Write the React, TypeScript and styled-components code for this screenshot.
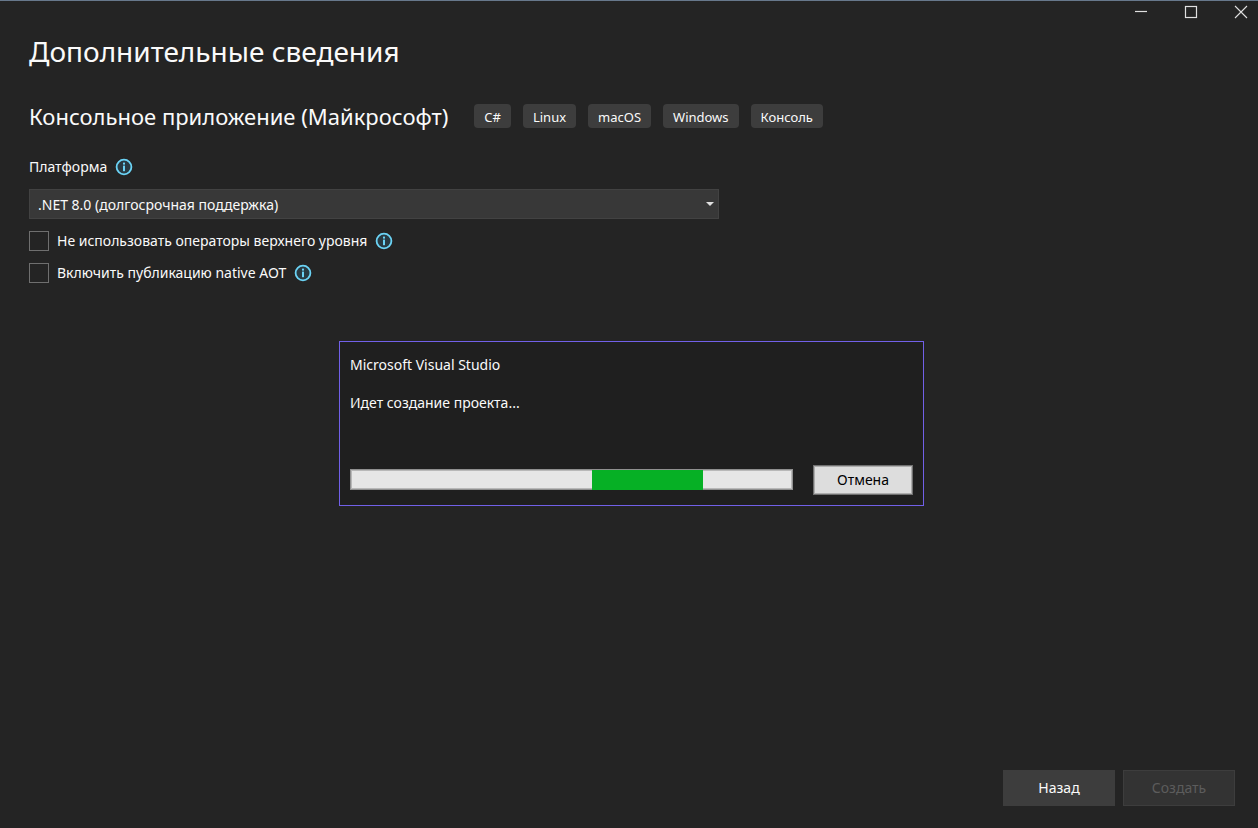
import React from "react";
import styled, { createGlobalStyle } from "styled-components";

const GlobalStyle = createGlobalStyle`
  *, *::before, *::after { box-sizing: border-box; }
  body {
    margin: 0;
    background: #242424;
    color: #fafafa;
    font: 14px/20px "Noto Sans", "Open Sans", sans-serif;
  }
  button, select, input { font: inherit; color: inherit; margin: 0; }
`;

const Window = styled.div`
  min-height: 100vh;
  display: flex;
  flex-direction: column;
  border-top: 1px solid #67788c;
`;

const Caption = styled.header`
  display: flex;
  justify-content: flex-end;
  gap: 16px;
`;

const CaptionButton = styled.button`
  width: 34px;
  height: 22px;
  padding: 0;
  border: 0;
  background: none;
  color: #e0e0e0;
  display: flex;
  align-items: center;
  justify-content: center;
`;

const Content = styled.main`
  flex: 1;
  padding: 8px 28px 0 29px;
`;

const Title = styled.h1`
  margin: 0;
  font-size: 28px;
  line-height: 40px;
  font-weight: 400;
`;

const TemplateRow = styled.div`
  display: flex;
  align-items: center;
  gap: 26px;
  margin-top: 29px;
`;

const TemplateName = styled.h2`
  margin: 0;
  font-size: 22px;
  line-height: 32px;
  font-weight: 400;
`;

const Tags = styled.ul`
  display: flex;
  gap: 12px;
  margin: 0;
  padding: 0;
  list-style: none;
`;

const Tag = styled.li`
  height: 24px;
  padding: 0 10px;
  border-radius: 4px;
  background: #3d3d3d;
  font-size: 13px;
  line-height: 26px;
`;

const FieldHeader = styled.div`
  display: flex;
  align-items: center;
  gap: 8px;
  margin-top: 25px;
`;

const SelectBox = styled.div`
  display: grid;
  align-items: center;
  max-width: 690px;
  margin: 12px 0;
  > * { grid-area: 1 / 1; }
  > svg { justify-self: end; margin-right: 5px; pointer-events: none; }
`;

const Select = styled.select`
  appearance: none;
  width: 100%;
  height: 30px;
  padding: 1px 24px 0 8px;
  border: 1px solid #424242;
  border-radius: 0;
  background: #383838;
`;

const OptionRow = styled.div`
  display: flex;
  align-items: center;
  gap: 8px;
  margin-bottom: 12px;
`;

const CheckLabel = styled.label`
  display: flex;
  align-items: center;
  gap: 8px;
`;

const Checkbox = styled.input`
  appearance: none;
  width: 20px;
  height: 20px;
  border: 1px solid #6f6f6f;
  background: #242424;
  &:checked { background: #7160e8; }
`;

const Footer = styled.footer`
  display: flex;
  justify-content: flex-end;
  gap: 8px;
  padding: 0 23px 22px;
`;

const FooterButton = styled.button`
  width: 112px;
  height: 36px;
  border: 1px solid #3d3d3d;
  background: #3d3d3d;
  &:disabled { background: #333333; color: #5c5c5c; }
`;

const Overlay = styled.div`
  position: fixed;
  inset: 0;
  display: flex;
  align-items: center;
  justify-content: center;
  padding: 19px 0 0 5px;
  pointer-events: none;
`;

const Dialog = styled.section`
  width: 585px;
  max-width: 100%;
  padding: 13px 10px 10px;
  border: 1px solid #7160e8;
  background: #1f1f1f;
  pointer-events: auto;
`;

const DialogTitle = styled.h3`
  margin: 0;
  font-size: 14px;
  font-weight: 400;
`;

const DialogText = styled.p`
  margin: 18px 0 52px;
`;

const DialogActions = styled.div`
  display: flex;
  align-items: center;
  gap: 20px;
`;

const Progress = styled.div`
  flex: 1;
  height: 21px;
  margin-bottom: 1px;
  display: flex;
  background: #e6e6e6;
  box-shadow: inset 0 0 0 1px #909090, inset 0 0 0 2px #b8b8b8;
`;

const ProgressChunk = styled.div`
  width: 25%;
  margin-top: 1px;
  background: #06b025;
`;

const CancelButton = styled.button`
  width: 100px;
  height: 30px;
  padding: 0;
  border: 1px solid #707070;
  background: #dddddd;
  box-shadow: inset 0 0 0 1px #adadad;
  color: #000000;
`;

const InfoIcon = () => (
  <svg width="18" height="18" viewBox="0 0 18 18" role="img" aria-label="Сведения">
    <circle cx="9" cy="9" r="7.4" fill="#293a42" stroke="#6bd3f5" strokeWidth="1.8" />
    <rect x="8" y="4.6" width="2" height="2" fill="#6bd3f5" />
    <rect x="8" y="7.6" width="2" height="5.6" fill="#6bd3f5" />
  </svg>
);

const tags = ["C#", "Linux", "macOS", "Windows", "Консоль"];
const options = ["Не использовать операторы верхнего уровня", "Включить публикацию native AOT"];

export default function App() {
  return (
    <Window>
      <GlobalStyle />
      <Caption>
        <CaptionButton aria-label="Свернуть">
          <svg width="14" height="14" viewBox="0 0 14 14">
            <path d="M1 6.5h12" stroke="currentColor" strokeWidth="1.2" />
          </svg>
        </CaptionButton>
        <CaptionButton aria-label="Развернуть">
          <svg width="14" height="14" viewBox="0 0 14 14">
            <rect x="1.5" y="1.5" width="11" height="11" fill="none" stroke="currentColor" strokeWidth="1.2" />
          </svg>
        </CaptionButton>
        <CaptionButton aria-label="Закрыть">
          <svg width="14" height="14" viewBox="0 0 14 14">
            <path d="M1 1l12 12M13 1L1 13" stroke="currentColor" strokeWidth="1.1" />
          </svg>
        </CaptionButton>
      </Caption>
      <Content>
        <Title>Дополнительные сведения</Title>
        <TemplateRow>
          <TemplateName>Консольное приложение (Майкрософт)</TemplateName>
          <Tags>
            {tags.map((tag) => (
              <Tag key={tag}>{tag}</Tag>
            ))}
          </Tags>
        </TemplateRow>
        <FieldHeader>
          <label htmlFor="framework">Платформа</label>
          <InfoIcon />
        </FieldHeader>
        <SelectBox>
          <Select id="framework">
            <option>.NET 8.0 (долгосрочная поддержка)</option>
          </Select>
          <svg width="8" height="4" viewBox="0 0 8 4">
            <path d="M0 0h8L4 4z" fill="#e0e0e0" />
          </svg>
        </SelectBox>
        {options.map((option) => (
          <OptionRow key={option}>
            <CheckLabel>
              <Checkbox type="checkbox" />
              {option}
            </CheckLabel>
            <InfoIcon />
          </OptionRow>
        ))}
      </Content>
      <Footer>
        <FooterButton>Назад</FooterButton>
        <FooterButton disabled>Создать</FooterButton>
      </Footer>
      <Overlay>
        <Dialog role="dialog" aria-labelledby="dialog-title">
          <DialogTitle id="dialog-title">Microsoft Visual Studio</DialogTitle>
          <DialogText>Идет создание проекта...</DialogText>
          <DialogActions>
            <Progress role="progressbar" aria-label="Идет создание проекта">
              <ProgressChunk style={{ marginLeft: "54.6%" }} />
            </Progress>
            <CancelButton>Отмена</CancelButton>
          </DialogActions>
        </Dialog>
      </Overlay>
    </Window>
  );
}
